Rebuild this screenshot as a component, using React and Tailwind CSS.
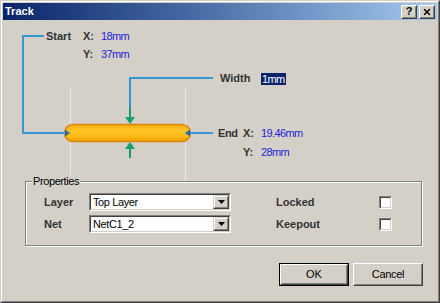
import { X } from 'lucide-react'

function TitleButton({ children }) {
    return (
        <div className="w-[16px] h-[14px] bg-[#d4d0c8] border border-t-white border-l-white border-r-[#404040] border-b-[#404040]">
            <div className="h-full flex items-center justify-center border border-t-[#d4d0c8] border-l-[#d4d0c8] border-r-[#808080] border-b-[#808080] text-black font-bold text-[11px] leading-none">
                {children}
            </div>
        </div>
    )
}

function Combo({ value }) {
    return (
        <div className="w-[142px] h-[18px] border border-t-[#808080] border-l-[#808080] border-r-white border-b-white">
            <div className="h-full flex bg-white border border-t-[#404040] border-l-[#404040] border-r-[#d4d0c8] border-b-[#d4d0c8]">
                <span className="flex-1 pl-[2px] text-[11px] leading-[14px] tracking-[-0.4px] text-black">{value}</span>
                <div className="w-[16px] h-full bg-[#d4d0c8] border border-t-[#d4d0c8] border-l-[#d4d0c8] border-r-[#404040] border-b-[#404040]">
                    <div className="h-full flex items-center justify-center border border-t-white border-l-white border-r-[#808080] border-b-[#808080]">
                        <svg width="7" height="4" viewBox="0 0 7 4"><path d="M0 0h7L3.5 4z" fill="#000" /></svg>
                    </div>
                </div>
            </div>
        </div>
    )
}

function Checkbox() {
    return (
        <div className="w-[13px] h-[13px] border border-t-[#808080] border-l-[#808080] border-r-white border-b-white">
            <div className="h-full bg-white border border-t-[#404040] border-l-[#404040] border-r-[#d4d0c8] border-b-[#d4d0c8]"></div>
        </div>
    )
}

const label = "absolute text-[11px] leading-[13px] font-bold text-[#333]"
const value = "absolute text-[11px] leading-[13px] tracking-[-0.6px] text-[#2323d8]"

export default function App() {
    return (
        <div className="w-[440px] h-[303px] bg-[#d4d0c8] border border-t-[#d4d0c8] border-l-[#d4d0c8] border-r-[#404040] border-b-[#404040] font-['Liberation_Sans',Arial,sans-serif]">
            <div className="h-full flex flex-col border border-t-white border-l-white border-r-[#808080] border-b-[#808080] p-px">

                {/* title bar */}
                <div className="h-[17px] shrink-0 flex items-center px-[2px] bg-gradient-to-r from-[#0a246a] to-[#a6caf0]">
                    <span className="text-white font-bold text-[11px] leading-none">Track</span>
                    <div className="ml-auto flex gap-[2px]">
                        <TitleButton>?</TitleButton>
                        <TitleButton><X size={10} strokeWidth={3.5} /></TitleButton>
                    </div>
                </div>

                {/* track diagram */}
                <div className="relative h-[161px] shrink-0">
                    <svg className="absolute left-0 top-0" width="432" height="161" viewBox="0 0 432 161">
                        <defs>
                            <linearGradient id="pill" x1="0" y1="0" x2="0" y2="1">
                                <stop offset="0" stopColor="#f6a90f" />
                                <stop offset="0.35" stopColor="#ffc426" />
                                <stop offset="0.7" stopColor="#fcb916" />
                                <stop offset="1" stopColor="#ef9f0a" />
                            </linearGradient>
                        </defs>
                        <g transform="translate(-3 -20)">
                            <line x1="70.5" y1="88" x2="70.5" y2="181" stroke="#ebe8e1" />
                            <line x1="185.5" y1="88" x2="185.5" y2="181" stroke="#ebe8e1" />

                            <polyline points="44,36 23,36 23,133 66,133" fill="none" stroke="#3597d3" strokeWidth="2" />
                            <polyline points="213,78 130,78 130,107" fill="none" stroke="#3597d3" strokeWidth="2" />

                            <rect x="64.5" y="124.5" width="126" height="17" rx="8.5" fill="url(#pill)" stroke="#d9850e" strokeWidth="1.5" />

                            <line x1="189" y1="133" x2="213" y2="133" stroke="#3597d3" strokeWidth="2" />
                            <polygon points="65,129.5 70,133 65,136.5" fill="#1f6fb0" />
                            <polygon points="190,129.5 185,133 190,136.5" fill="#1f6fb0" />

                            <line x1="130" y1="107" x2="130" y2="118" stroke="#14a072" strokeWidth="2" />
                            <polygon points="125,117 135,117 130,124" fill="#14a072" />
                            <polygon points="125,149 135,149 130,142" fill="#14a072" />
                            <line x1="130" y1="148" x2="130" y2="158" stroke="#14a072" strokeWidth="2" />
                        </g>
                    </svg>

                    <span className={`${label} left-[43px] top-[10px]`}>Start</span>
                    <span className={`${label} left-[80px] top-[10px]`}>X:</span>
                    <span className={`${value} left-[98px] top-[10px]`}>18mm</span>
                    <span className={`${label} left-[80px] top-[28px]`}>Y:</span>
                    <span className={`${value} left-[98px] top-[28px]`}>37mm</span>

                    <span className={`${label} left-[217px] top-[52px]`}>Width</span>
                    <span className="absolute left-[258px] top-[53px] h-[12px] px-px bg-[#0a246a] text-white text-[11px] leading-[12px] tracking-[-0.6px]">1mm</span>

                    <span className={`${label} left-[215px] top-[107px] tracking-[-0.4px]`}>End</span>
                    <span className={`${label} left-[240px] top-[107px]`}>X:</span>
                    <span className={`${value} left-[258px] top-[107px]`}>19.46mm</span>
                    <span className={`${label} left-[240px] top-[126px]`}>Y:</span>
                    <span className={`${value} left-[258px] top-[126px]`}>28mm</span>
                </div>

                {/* properties group */}
                <div className="relative ml-[22px] w-[397px] h-[65px] shrink-0 border border-[#808080] shadow-[inset_1px_1px_0_#fff,1px_1px_0_#fff]">
                    <span className="absolute -top-[7px] left-[6px] px-px bg-[#d4d0c8] text-[11px] leading-[13px] tracking-[-0.4px] text-black">Properties</span>
                    <div className="flex flex-col gap-[4px] pt-[11px] pl-[18px]">
                        <div className="flex items-center h-[18px]">
                            <span className="w-[45px] text-[11px] font-bold text-[#333]">Layer</span>
                            <Combo value="Top Layer" />
                            <span className="ml-[45px] w-[103px] text-[11px] font-bold text-[#333]">Locked</span>
                            <Checkbox />
                        </div>
                        <div className="flex items-center h-[18px]">
                            <span className="w-[45px] text-[11px] font-bold text-[#333]">Net</span>
                            <Combo value="NetC1_2" />
                            <span className="ml-[45px] w-[103px] text-[11px] font-bold text-[#333]">Keepout</span>
                            <Checkbox />
                        </div>
                    </div>
                </div>

                {/* buttons */}
                <div className="flex justify-end gap-[4px] mt-[17px] pr-[14px]">
                    <div className="w-[70px] h-[23px] border border-black">
                        <div className="h-full border border-t-white border-l-white border-r-[#404040] border-b-[#404040]">
                            <div className="h-full flex items-center justify-center border border-t-[#d4d0c8] border-l-[#d4d0c8] border-r-[#808080] border-b-[#808080] text-[11px] text-black">OK</div>
                        </div>
                    </div>
                    <div className="w-[70px] h-[23px] border border-t-white border-l-white border-r-[#404040] border-b-[#404040]">
                        <div className="h-full flex items-center justify-center border border-t-[#d4d0c8] border-l-[#d4d0c8] border-r-[#808080] border-b-[#808080] text-[11px] tracking-[-0.3px] text-black">Cancel</div>
                    </div>
                </div>
            </div>
        </div>
    )
}
